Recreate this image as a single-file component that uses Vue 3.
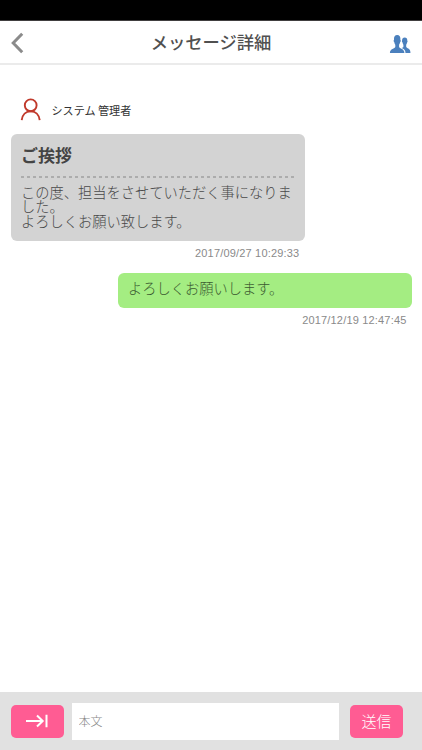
<script setup>
import { ref } from 'vue'

const body = ref('')
const received = {
  sender: 'システム 管理者',
  title: 'ご挨拶',
  text: 'この度、担当をさせていただく事になりました。\nよろしくお願い致します。',
  date: '2017/09/27 10:29:33',
}
const sent = { text: 'よろしくお願いします。', date: '2017/12/19 12:47:45' }
</script>

<template>
  <div class="screen">
    <div class="status"></div>
    <header class="header">
      <button class="icon-button" aria-label="戻る">
        <svg width="14" height="22" viewBox="0 0 14 22"><path d="M11.200 1.800 2.200 11l9 9.200" fill="none" stroke="#8b8b8b" stroke-width="3" /></svg>
      </button>
      <h1>メッセージ詳細</h1>
      <button class="icon-button members" aria-label="メンバー">
        <svg width="22" height="18" viewBox="0 0 22 18" fill="#4b80bd">
          <path d="M13 6c0-2.500 1-3.600 2.700-3.600s2.800 1.100 2.600 3.400c.5.200.3 1.300-.2 1.800-.2 1.200-.6 1.600-.9 2.100v2.100c.4 1.500 4.200 1.700 4.200 5.100v1.100h-4.900c0-2.900-1.600-4.100-3.900-5 1.100-.4 1.700-.7 1.800-1.300V9.700c-.4-.5-.7-.9-.8-2.100-.6-.5-.8-1.400-.6-1.600z" />
          <path d="M5 5.100C4.700 1.700 6 0 8.200 0s3.500 1.700 3.200 5.100c.6.200.4 1.700-.3 2.200-.2 1.300-.7 1.900-1 2.400v2.200c.3 1.800 5.300 1.500 5.300 6.100H.9c0-4.600 5.100-4.300 5.400-6.100V9.700c-.4-.5-.8-1.100-1-2.400-.7-.5-.9-2-.3-2.200z" />
        </svg>
      </button>
    </header>

    <main class="thread">
      <div class="sender">
        <svg width="22" height="24" viewBox="0 0 22 24" fill="none" stroke="#c0392b" stroke-width="1.900">
          <circle cx="10.700" cy="7.300" r="5.900" />
          <path d="M1.700 22.200c.6-5.400 4.200-8.900 9-8.900s8.400 3.500 9 8.900" />
        </svg>
        <span>{{ received.sender }}</span>
      </div>
      <article class="bubble received">
        <h2>{{ received.title }}</h2>
        <div class="rule"></div>
        <p>{{ received.text }}</p>
      </article>
      <time class="received-date">{{ received.date }}</time>
      <article class="bubble sent"><p>{{ sent.text }}</p></article>
      <time class="sent-date">{{ sent.date }}</time>
    </main>

    <footer class="composer">
      <button class="action" aria-label="閉じる">
        <svg width="24" height="14" viewBox="0 0 24 14" fill="none" stroke="#fff" stroke-width="2"><path d="M1 7h17M12 1.500 17.700 7 12 12.500M21.500 .7v12.600" /></svg>
      </button>
      <input v-model="body" placeholder="本文" />
      <button class="action send">送信</button>
    </footer>
  </div>
</template>

<style>
body {
  margin: 0;
  background: #fff;
}
</style>

<style scoped>
.screen {
  display: flex;
  flex-direction: column;
  width: 422px;
  height: 750px;
  overflow: hidden;
  background: #fff;
  font-family: "Noto Sans CJK JP", sans-serif;
}
button,
input {
  border: 0;
  padding: 0;
  font-family: inherit;
}
svg {
  display: block;
}
.status {
  flex: none;
  height: 20px;
  background: #000;
  border-bottom: 1px solid #413f40;
}
.header {
  box-sizing: border-box;
  flex: none;
  display: flex;
  align-items: center;
  justify-content: space-between;
  height: 44px;
  padding: 2px 11px 0;
  border-bottom: 2px solid #ebebeb;
}
.icon-button {
  display: flex;
  width: 22px;
  background: none;
}
.members {
  padding-top: 2px;
}
h1 {
  margin: 0;
  padding-bottom: 2px;
  font-size: 17.300px;
  line-height: 26px;
  font-weight: 500;
  color: #505050;
}
.thread {
  flex: 1;
  display: flex;
  flex-direction: column;
  padding: 33px 10.500px 0;
}
.sender {
  display: flex;
  align-items: center;
  height: 24px;
  padding-left: 9.500px;
  gap: 9.500px;
  margin-bottom: 12px;
  font-size: 11.100px;
  color: #333;
}
.bubble {
  box-sizing: border-box;
  width: 294px;
  border-radius: 6px;
  padding: 0 10.500px;
}
.bubble p {
  margin: 0;
  font-size: 14.250px;
  line-height: 14.400px;
  font-weight: 300;
  white-space: pre-line;
  color: #484848;
}
.received {
  height: 107px;
  background: #d3d3d3;
}
.received h2 {
  margin: 0;
  padding-top: 8px;
  font-size: 17px;
  line-height: 25px;
  font-weight: 700;
  color: #444;
}
.rule {
  height: 2px;
  margin: 9px 0 7px;
  background: repeating-linear-gradient(90deg, #acacac 0 3.500px, transparent 3.500px 6px);
}
.received p {
  width: 276px;
}
.sent {
  align-self: flex-end;
  height: 35px;
  margin-top: 13px;
  padding-top: 8px;
  background: #a4ed82;
}
.sent p {
  color: #3b5a30;
}
time {
  font-family: "Liberation Sans", sans-serif;
  font-size: 11px;
  letter-spacing: 0.180px;
  line-height: 14px;
  color: #8a8a8a;
}
.received-date {
  margin: 5px 0 0 184.500px;
}
.sent-date {
  align-self: flex-end;
  margin: 5px 5px 0 0;
}
.composer {
  box-sizing: border-box;
  flex: none;
  display: flex;
  align-items: center;
  height: 58px;
  padding: 0 19px 0 10.500px;
  background: #e1e1e1;
}
.action {
  display: flex;
  align-items: center;
  justify-content: center;
  flex: none;
  width: 53px;
  height: 33px;
  border-radius: 5px;
  background: #ff5c93;
  color: #fff;
  font-size: 15px;
  font-weight: 300;
}
.send {
  padding-bottom: 2px;
}
.composer input {
  flex: 1;
  min-width: 0;
  height: 37px;
  margin: 0 11px 0 8px;
  padding: 0 7px 2px;
  box-sizing: border-box;
  background: #fff;
  font-size: 12px;
  font-weight: 300;
}
.composer input::placeholder {
  color: #888;
  opacity: 1;
}
</style>
